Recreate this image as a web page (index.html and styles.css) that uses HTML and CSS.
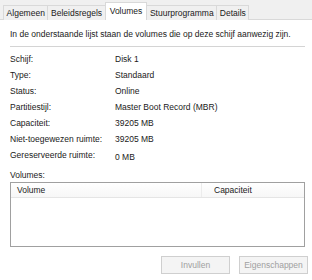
FILE: index.html
```html
<html>
<head><title>Eigenschappen schijf</title>
<link rel="stylesheet" href="styles.css">
</head>
<body>

<div class="tabs">
  <span class="tab">Algemeen</span>
  <span class="tab">Beleidsregels</span>
  <span class="tab active">Volumes</span>
  <span class="tab">Stuurprogramma</span>
  <span class="tab">Details</span>
</div>

<div class="page">
  <p class="intro">In de onderstaande lijst staan de volumes die op deze schijf aanwezig zijn.</p>
  <div class="rule"></div>

  <div class="props">
    <span>Schijf:</span><span>Disk 1</span>
    <span>Type:</span><span>Standaard</span>
    <span>Status:</span><span>Online</span>
    <span>Partitiestijl:</span><span>Master Boot Record (MBR)</span>
    <span>Capaciteit:</span><span>39205 MB</span>
    <span>Niet-toegewezen ruimte:</span><span>39205 MB</span>
    <span class="last">Gereserveerde ruimte:</span><span class="last low">0 MB</span>
  </div>

  <div class="label">Volumes:</div>
  <div class="list">
    <div class="head">
      <span class="col-vol">Volume</span>
      <span class="col-cap">Capaciteit</span>
    </div>
  </div>

  <div class="buttons">
    <button type="button" disabled>Invullen</button>
    <button type="button" disabled>Eigenschappen</button>
  </div>
</div>

</body>
</html>
```

FILE: styles.css
```css
html {
  background: #ffffff;
}

body {
  margin: 0;
  color: #1a1a1a;
  font: 8.5px/1.2 "Liberation Sans", Arial, sans-serif;
}

/* tab strip */
.tabs {
  display: flex;
  align-items: flex-end;
  height: 19px;
  padding-left: 3px;
  background: #f0f0f0;
  border-bottom: 1px solid #d9d9d9;
}

.tab {
  height: 14px;
  line-height: 14px;
  padding: 0 2.6px;
  margin-bottom: -1px;
  border: 1px solid #d9d9d9;
  border-bottom: 0;
  margin-right: -1px;
  background: #f0f0f0;
}

.tab.active {
  height: 17px;
  line-height: 16px;
  background: #fff;
  position: relative;
  z-index: 1;
  padding: 0 4px;
  margin-right: -1px;
}

.page {
  padding: 0 7px 0 10px;
}

.intro {
  margin: 9px 0 0;
}

.rule {
  height: 1px;
  background: #d4d4d4;
  margin: 7px 0 4px;
}

.props {
  display: grid;
  grid-template-columns: 105px 1fr;
  grid-auto-rows: 16px;
  align-items: center;
}

.props .low {
  margin-top: 3px;
}

.label {
  margin-top: 7px;
  height: 12px;
}

.list {
  height: 63px;
  border: 1px solid #a0a0a0;
  background: #fff;
}

.head {
  display: flex;
  height: 14px;
  line-height: 14px;
  border-bottom: 1px solid #e5e5e5;
  background: linear-gradient(#ffffff, #f7f7f7);
}

.col-vol {
  width: 184px;
  padding-left: 6px;
  border-right: 1px solid #ececec;
}

.col-cap {
  padding-left: 12px;
}

.buttons {
  display: flex;
  justify-content: flex-end;
  gap: 9px;
  margin-top: 9px;
  margin-right: -3px;
}

button {
  width: 69px;
  height: 18px;
  padding: 0;
  font: inherit;
  color: #a0a0a0;
  background: #f4f4f4;
  border: 1px solid #cfcfcf;
}
```
